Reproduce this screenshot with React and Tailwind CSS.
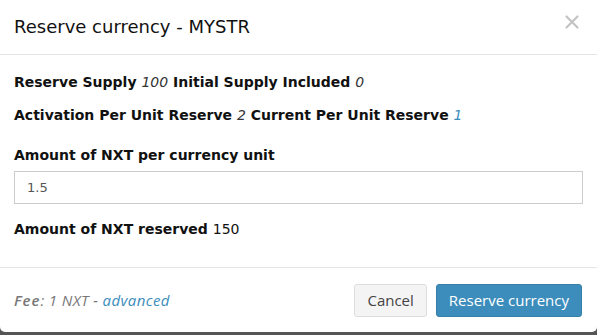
import { X } from 'lucide-react';

export default function App() {
  return (
    <div className="w-[597px] h-[335px] bg-[#555] overflow-hidden font-['DejaVu_Sans',sans-serif]">
      <div className="h-[332px] bg-white rounded-b-[5px] flex flex-col">
        {/* Header */}
        <div className="h-[55px] shrink-0 border-b border-[#e5e5e5] flex items-center justify-between pl-[14px] pr-[14px]">
          <h4 className="text-[18px] text-[#111] leading-none">Reserve currency - MYSTR</h4>
          <X size={22} strokeWidth={2.5} className="text-[#c4c4c4] mb-[10px]" />
        </div>

        {/* Body */}
        <div className="flex-1 px-[14px] pt-[17px] text-[14px] leading-[20px] text-[#111]">
          <p className="font-bold">
            Reserve Supply <i className="font-normal text-[#333]">100</i> Initial Supply Included{' '}
            <i className="font-normal text-[#333]">0</i>
          </p>
          <p className="font-bold mt-[13px]">
            Activation Per Unit Reserve <i className="font-normal text-[#333]">2</i> Current Per Unit Reserve{' '}
            <i className="font-normal text-[#3c8dbc]">1</i>
          </p>
          <label className="block font-bold mt-[20px]">Amount of NXT per currency unit</label>
          <input
            type="text"
            defaultValue="1.5"
            className="block mt-[6px] w-full h-[33px] border border-[#ccc] px-[12px] text-[13px] text-[#555] outline-none"
          />
          <p className="font-bold mt-[15px]">
            Amount of NXT reserved <span className="font-normal">150</span>
          </p>
        </div>

        {/* Footer */}
        <div className="h-[65px] shrink-0 border-t border-[#e5e5e5] flex items-center justify-between pl-[14px] pr-[15px]">
          <span className="italic text-[15px] tracking-[0.4px] text-[#777] font-['Open_Sans',sans-serif]">
            <span className="font-semibold tracking-[1px]">Fee</span>: 1 NXT - <a className="text-[#3c8dbc]">advanced</a>
          </span>
          <div className="flex gap-[9px] font-['Open_Sans',sans-serif] text-[15px]">
            <button className="h-[33px] px-[12px] bg-[#f4f4f4] border border-[#ddd] rounded-[3px] text-[#444]">Cancel</button>
            <button className="h-[33px] px-[12px] bg-[#3c8dbc] border border-[#367fa9] rounded-[3px] text-white">Reserve currency</button>
          </div>
        </div>
      </div>
    </div>
  );
}
